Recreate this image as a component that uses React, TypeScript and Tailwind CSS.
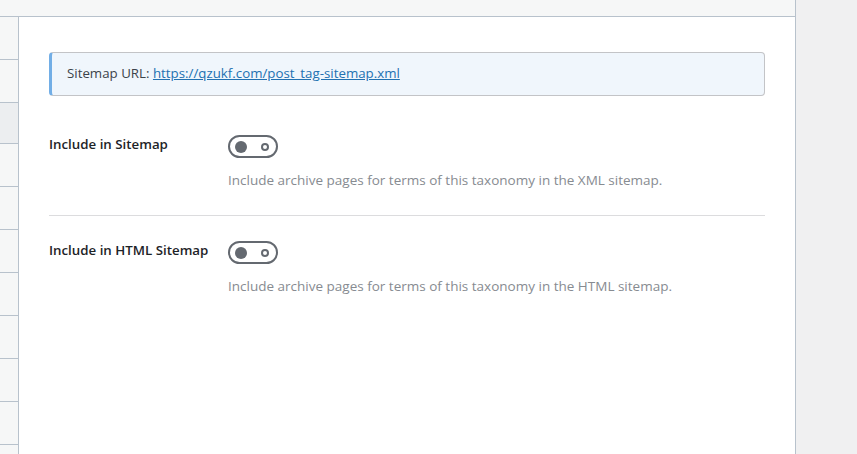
import React from "react";

function Toggle() {
  return (
    <div className="flex h-[23px] w-[50px] items-center justify-between rounded-full border-2 border-[#646970] pl-[5px] pr-[7px]">
      <span className="block h-[12px] w-[12px] rounded-full bg-[#646970]" />
      <span className="block h-[8px] w-[8px] rounded-full border-2 border-[#646970]" />
    </div>
  );
}

function Row({ label, desc, divider }: { label: string; desc: string; divider?: boolean }) {
  return (
    <div className={divider ? "flex border-b border-[#dcdcde] pb-[25px] pt-[39px]" : "flex pt-[25px]"}>
      <div className="mt-[-1px] w-[179px] text-[13.3px] font-semibold leading-[20px] text-[#1d2327]">{label}</div>
      <div className="flex flex-col">
        <Toggle />
        <div className="mt-[12px] text-[13.5px] leading-[20px] text-[#878b91]">{desc}</div>
      </div>
    </div>
  );
}

export default function App() {
  const rows = [0, 1, 2, 3, 4, 5, 6, 7, 8, 9];
  return (
    <div
      className="flex h-[454px] w-[857px] overflow-hidden bg-[#f0f0f1]"
      style={{ fontFamily: '"Open Sans", "Noto Sans", sans-serif' }}
    >
      <div className="flex h-full w-[796px] flex-col border-r border-[#b8c2cc]">
        <div className="h-[17px] shrink-0 border-b border-[#b8c2cc] bg-[#f6f7f7]" />
        <div className="flex flex-1">
          <div className="flex w-[19px] shrink-0 flex-col border-r border-[#b8c2cc] bg-[#f6f7f7]">
            <div className="h-[43px] shrink-0 border-b border-[#b8c2cc]" />
            <div className="h-[43px] shrink-0 border-b border-[#b8c2cc]" />
            <div className="h-[41px] shrink-0 border-b border-[#b8c2cc] bg-[#eceef0]" />
            {rows.map((r) => (
              <div key={r} className="h-[43px] shrink-0 border-b border-[#b8c2cc]" />
            ))}
          </div>
          <div className="flex-1 bg-white px-[30px] pt-[35px]">
            <div className="flex h-[44px] items-center rounded-[4px] border border-l-[3px] border-[#c3c4c7] border-l-[#72aee6] bg-[#f0f6fc] pl-[15px] text-[13.3px] text-[#3c434a]">
              <span>Sitemap URL:&nbsp;</span>
              <a href="#" className="text-[#2271b1] underline">
                https://qzukf.com/post_tag-sitemap.xml
              </a>
            </div>
            <Row
              label="Include in Sitemap"
              desc="Include archive pages for terms of this taxonomy in the XML sitemap."
              divider
            />
            <Row
              label="Include in HTML Sitemap"
              desc="Include archive pages for terms of this taxonomy in the HTML sitemap."
            />
          </div>
        </div>
      </div>
    </div>
  );
}
